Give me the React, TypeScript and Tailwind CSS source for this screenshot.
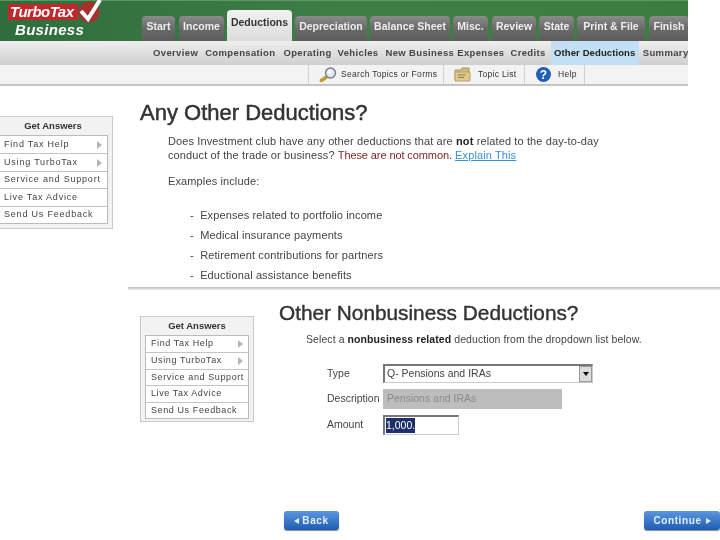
import React from 'react';

const arial = { fontFamily: '"Liberation Sans", Arial, sans-serif' };

const tabs = [
  { label: 'Start', w: 'w-[33px]', ml: 'ml-0' },
  { label: 'Income', w: 'w-[45px]', ml: 'ml-[4px]' },
  { label: 'Deductions', w: 'w-[65px]', ml: 'ml-[3px]', active: true },
  { label: 'Depreciation', w: 'w-[72px]', ml: 'ml-[3px]' },
  { label: 'Balance Sheet', w: 'w-[80px]', ml: 'ml-[3px]' },
  { label: 'Misc.', w: 'w-[35px]', ml: 'ml-[3px]' },
  { label: 'Review', w: 'w-[44px]', ml: 'ml-[4px]' },
  { label: 'State', w: 'w-[35px]', ml: 'ml-[3px]' },
  { label: 'Print & File', w: 'w-[68px]', ml: 'ml-[3px]' },
  { label: 'Finish', w: 'w-[40px]', ml: 'ml-[4px]' },
];

const subTabs = [
  { label: 'Overview', ml: 'ml-0' },
  { label: 'Compensation', ml: 'ml-[7px]' },
  { label: 'Operating', ml: 'ml-[8px]' },
  { label: 'Vehicles', ml: 'ml-[6px]' },
  { label: 'New Business Expenses', ml: 'ml-[7px]' },
  { label: 'Credits', ml: 'ml-[6px]' },
];

function MagnifierIcon() {
  return (
    <svg width="20" height="16" viewBox="0 0 20 16">
      <rect x="1" y="10.5" width="9" height="3.6" rx="1.8" transform="rotate(-32 5 12)" fill="#c59a2c" />
      <circle cx="12.5" cy="6" r="5" fill="#dfe8ee" stroke="#77808a" strokeWidth="1.4" />
      <circle cx="11.5" cy="5" r="2" fill="#fff" />
    </svg>
  );
}

function FolderIcon() {
  return (
    <svg width="17" height="15" viewBox="0 0 17 15">
      <path d="M1 3h6l1-2h7v12H1z" fill="#d6bb7c" stroke="#ab955f" />
      <path d="M1 5h15v9H1z" fill="#e0c98f" stroke="#b9a26b" />
      <path d="M4 8h8M4 10.5h6" stroke="#8f8058" />
    </svg>
  );
}

function HelpIcon() {
  return (
    <div className="flex h-[15px] w-[15px] items-center justify-center rounded-full bg-[#1f5fb4] text-[12px] font-bold leading-none text-white">
      ?
    </div>
  );
}

function Header() {
  return (
    <div className="w-[688px] shrink-0 overflow-hidden">
      <div className="relative flex h-[41px] items-end border-t border-[#5b9a5f] bg-gradient-to-r from-[#2f6d3d] via-[#3f7f46] to-[#3c7d3f] pl-[142px]">
        <div className="absolute left-[8px] top-[3px] h-[16px] w-[70px] bg-[#c0282c] pl-[2px] text-[15px] font-bold italic leading-[16px] tracking-[-0.5px] text-white">
          TurboTax
        </div>
        <svg className="absolute left-[76px] top-[-1px]" width="28" height="24" viewBox="0 0 28 24">
          <circle cx="13" cy="12" r="10.5" fill="#a5302c" />
          <path d="M5 11l7 8L24 0" fill="none" stroke="#fff" strokeWidth="4" />
        </svg>
        <div className="absolute left-[15px] top-[20px] text-[15px] font-bold italic leading-[18px] tracking-[0.3px] text-white">
          Business
        </div>
        {tabs.map((t) => (
          <div
            key={t.label}
            className={
              t.active
                ? `${t.w} ${t.ml} h-[31px] shrink-0 rounded-t-[4px] bg-gradient-to-b from-[#f1f1f1] to-[#dcdcdc] pt-[4px] text-center text-[10.5px] font-bold leading-[16px] text-[#333]`
                : `${t.w} ${t.ml} h-[25px] shrink-0 whitespace-nowrap rounded-t-[4px] bg-gradient-to-b from-[#8b8b8b] via-[#6a6a6a] to-[#5c5c5c] pt-[2px] text-center text-[10.5px] font-bold leading-[16px] text-[#eee]`
            }
          >
            {t.label}
          </div>
        ))}
      </div>
      <div className="flex h-[24px] items-center bg-gradient-to-b from-[#efefef] to-[#cfcfcf] pl-[153px] text-[9.5px] font-bold tracking-[0.36px] text-[#444]">
        {subTabs.map((s) => (
          <span key={s.label} className={`${s.ml} shrink-0 whitespace-nowrap`}>
            {s.label}
          </span>
        ))}
        <span className="ml-[5px] flex h-full w-[88px] shrink-0 items-center justify-center whitespace-nowrap bg-[#c3dff3] tracking-[0.1px] text-[#222]">
          Other Deductions
        </span>
        <span className="ml-[4px] shrink-0 whitespace-nowrap">Summary</span>
      </div>
      <div className="flex h-[21px] items-stretch border-b-2 border-[#c4c4c4] bg-[#f3f3f3] pl-[308px] text-[8.5px] tracking-[0.3px] text-[#333]">
        <div className="flex w-[136px] items-center border-x border-[#d0d0d0] pl-[9px]">
          <MagnifierIcon />
          <span className="ml-[3px]">Search Topics or Forms</span>
        </div>
        <div className="flex w-[81px] items-center border-r border-[#d0d0d0] pl-[10px]">
          <FolderIcon />
          <span className="ml-[7px]">Topic List</span>
        </div>
        <div className="flex w-[60px] items-center border-r border-[#d0d0d0] pl-[11px]">
          <HelpIcon />
          <span className="ml-[7px]">Help</span>
        </div>
      </div>
    </div>
  );
}

function GetAnswers({ className, rowClass }: { className: string; rowClass: string }) {
  const items = [
    { label: 'Find Tax Help', arrow: true },
    { label: 'Using TurboTax', arrow: true },
    { label: 'Service and Support' },
    { label: 'Live Tax Advice' },
    { label: 'Send Us Feedback' },
  ];
  return (
    <div className={`shrink-0 border border-[#c9c9c9] bg-[#f2f2f2] px-[4px] ${className}`}>
      <div className="h-[18px] text-center text-[9.5px] font-bold leading-[18px] text-[#333]">Get Answers</div>
      <div className="border border-[#bbb] bg-white">
        {items.map((item, i) => (
          <div
            key={item.label}
            className={`flex items-center justify-between pl-[5px] pr-[5px] text-[9px] text-[#444] ${rowClass} ${
              i > 0 ? 'border-t border-[#c4c4c4]' : ''
            }`}
          >
            <span className="whitespace-nowrap">{item.label}</span>
            {item.arrow && <span className="h-0 w-0 border-y-[4px] border-l-[5px] border-y-transparent border-l-[#b5b5b5]" />}
          </div>
        ))}
      </div>
    </div>
  );
}

function UpperPanel() {
  return (
    <div className="flex h-[201px] w-[720px] shrink-0 overflow-hidden">
      <GetAnswers className="ml-[-7px] mt-[30px] h-[113px] w-[120px]" rowClass="h-[17.4px] tracking-[0.8px]" />
      <div className="ml-[27px] min-w-0 flex-1 pt-[14px]">
        <h1 className="text-[22px] font-normal leading-[26px] text-[#333] [-webkit-text-stroke:0.5px_#333]">
          Any Other Deductions?
        </h1>
        <div className="ml-[28px] mt-[8px] w-[440px] text-[11px] leading-[14px] tracking-[0.12px] text-[#444]">
          <p>
            Does Investment club have any other deductions that are <b className="text-[#222]">not</b> related to the
            day-to-day conduct of the trade or business?{' '}
            <span className="tracking-[-0.1px] text-[#7b1f1f]">These are not common.</span>{' '}
            <span className="text-[#3c8fd6] underline">Explain This</span>
          </p>
          <p className="mt-[12px]">Examples include:</p>
          <ul className="ml-[22px] mt-[20px] flex flex-col gap-[6px]">
            {[
              'Expenses related to portfolio income',
              'Medical insurance payments',
              'Retirement contributions for partners',
              'Eductional assistance benefits',
            ].map((t) => (
              <li key={t} className="whitespace-nowrap">
                -&nbsp; {t}
              </li>
            ))}
          </ul>
        </div>
      </div>
    </div>
  );
}

function LowerPanel() {
  return (
    <div className="relative flex-1">
      <div className="ml-[128px] h-[3px] bg-gradient-to-b from-[#bdbdbd] to-[#eee]" />
      <div className="flex pl-[140px]">
        <GetAnswers className="mt-[26px] h-[106px] w-[114px]" rowClass="h-[16.4px] tracking-[0.6px]" />
        <div className="ml-[25px] pt-[11px]">
          <h2 className="text-[20.8px] font-normal leading-[24px] text-[#333] [-webkit-text-stroke:0.4px_#333]">
            Other Nonbusiness Deductions?
          </h2>
          <p className="ml-[27px] mt-[7px] text-[10.5px] leading-[14px] tracking-[0.08px] text-[#444]">
            Select a <b className="text-[#222]">nonbusiness related</b> deduction from the dropdown list below.
          </p>
          <div className="ml-[48px] mt-[18px] grid grid-cols-[56px_auto] items-center gap-y-[6px] text-[10.5px] text-[#444]">
            <span>Type</span>
            <div className="flex h-[19px] w-[210px] items-center justify-between border border-t-2 border-l-2 border-[#777] border-b-[#ccc] border-r-[#ccc] pl-[2px]">
              Q- Pensions and IRAs
              <span className="flex h-[16px] w-[13px] items-center justify-center border border-[#999] bg-[#ddd]">
                <span className="h-0 w-0 border-x-[3px] border-t-[4px] border-x-transparent border-t-black" />
              </span>
            </div>
            <span>Description</span>
            <div className="flex h-[20px] w-[179px] items-center bg-[#bdbdbd] pl-[4px] text-[#8a8a8a]">
              Pensions and IRAs
            </div>
            <span>Amount</span>
            <div className="flex h-[20px] w-[76px] items-center border border-t-2 border-l-2 border-[#777] border-b-[#ccc] border-r-[#ccc] pl-[1px]">
              <span className="bg-[#1c2f6b] text-white">1,000.</span>
            </div>
          </div>
        </div>
      </div>
      <div className="absolute left-[284px] top-[224px] flex h-[19px] w-[55px] items-center justify-center gap-[3px] rounded-[3px] bg-gradient-to-b from-[#5a97e0] to-[#1f5cb3] text-[10px] font-bold tracking-[0.6px] text-[#e3eefb] shadow-[0_1px_1px_#888]">
        <span className="h-0 w-0 border-y-[3.5px] border-r-[5px] border-y-transparent border-r-[#e3eefb]" />
        Back
      </div>
      <div className="absolute left-[644px] top-[224px] flex h-[19px] w-[76px] items-center justify-center gap-[4px] rounded-[3px] bg-gradient-to-b from-[#5a97e0] to-[#1f5cb3] text-[10px] font-bold tracking-[0.6px] text-[#e3eefb] shadow-[0_1px_1px_#888]">
        Continue
        <span className="h-0 w-0 border-y-[3.5px] border-l-[5px] border-y-transparent border-l-[#e3eefb]" />
      </div>
    </div>
  );
}

export default function App() {
  return (
    <div className="flex h-[540px] w-[720px] flex-col overflow-hidden bg-white blur-[0.3px]" style={arial}>
      <Header />
      <UpperPanel />
      <LowerPanel />
    </div>
  );
}
